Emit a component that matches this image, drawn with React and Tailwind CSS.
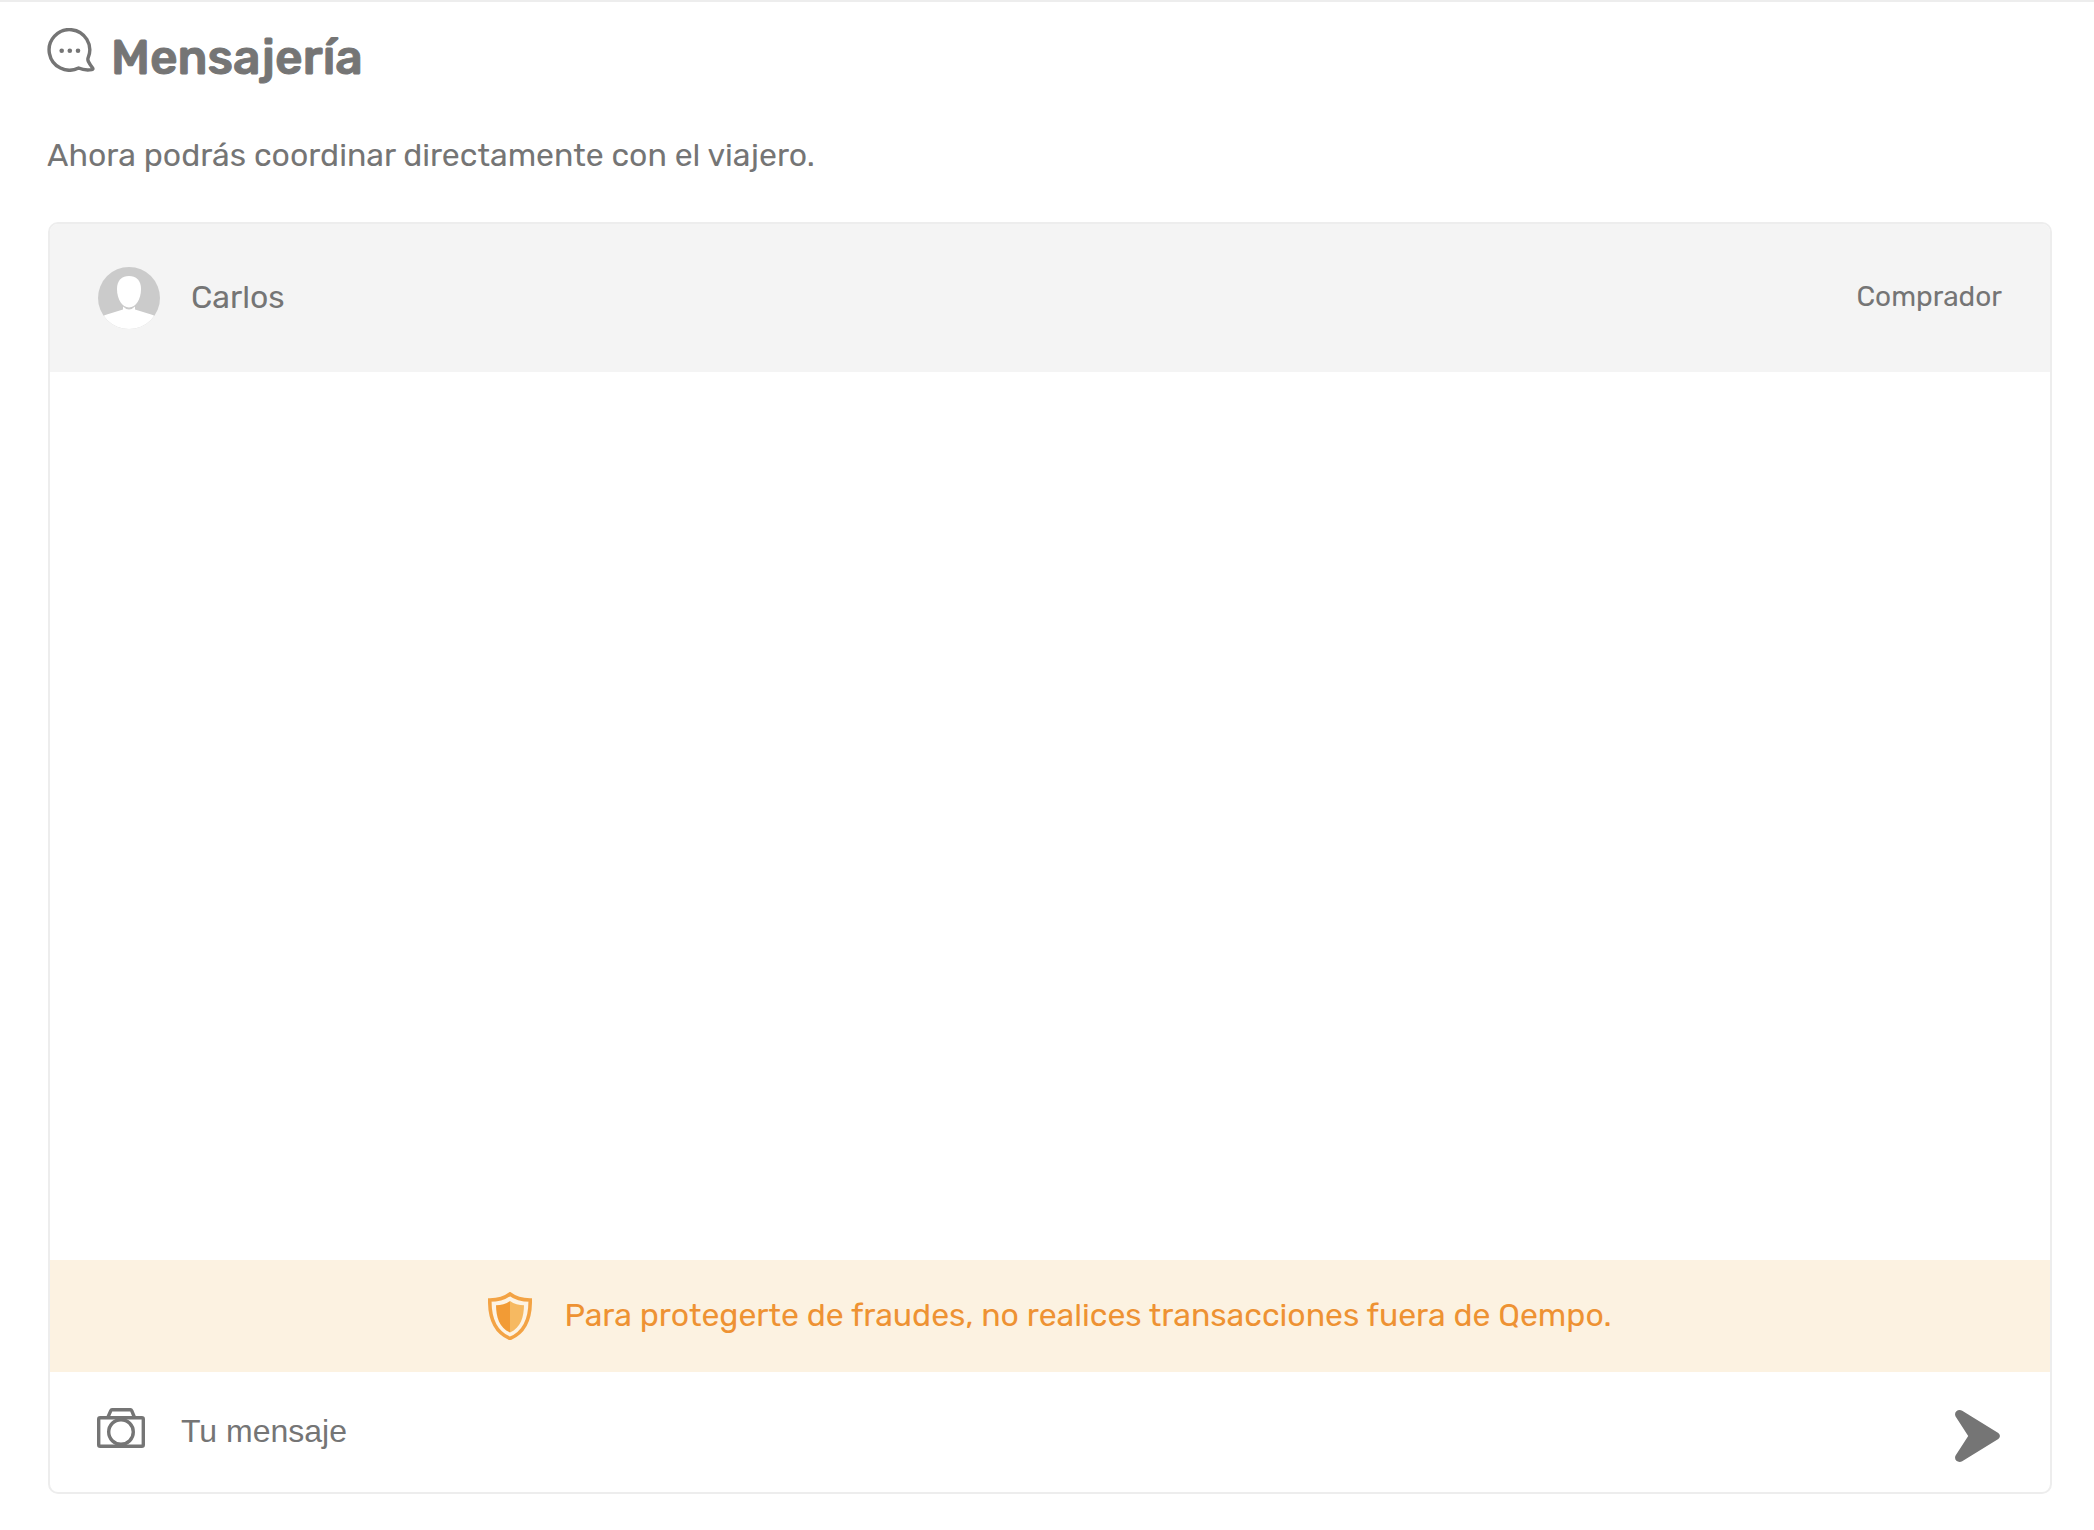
import { useState } from "react";

function ChatIcon() {
    return (
        <svg width="48" height="44" viewBox="0 0 48 44" fill="none" aria-hidden="true" className="shrink-0">
            <path
                d="M31.6 40 A20.3 20.3 0 1 1 41.2 29.6 C40.6 31 40.8 32.2 41.4 33.6 C42.4 35.7 44 38 45.5 39.8 C46.3 40.8 45.9 41.4 44.8 41.6 C40.5 42.3 36.5 42.2 31.6 40 Z"
                stroke="currentColor"
                strokeWidth="3.4"
                strokeLinejoin="round"
            />
            <circle cx="14.7" cy="22.7" r="2.3" fill="currentColor" />
            <circle cx="22.8" cy="22.7" r="2.3" fill="currentColor" />
            <circle cx="31" cy="22.7" r="2.3" fill="currentColor" />
        </svg>
    );
}

function Avatar() {
    return (
        <svg width="62" height="62" viewBox="0 0 62 62" role="img" aria-label="Foto de perfil" className="shrink-0">
            <clipPath id="avatar-clip">
                <circle cx="31" cy="31" r="31" />
            </clipPath>
            <g clipPath="url(#avatar-clip)">
                <rect width="62" height="62" fill="#cbcbcb" />
                <path d="M25 36 V42.5 L8 47.8 Q4 49 3 53 V62 H59 V53 Q58 49 54 47.8 L37 42.5 V36 Z" fill="#fff" />
                <path d="M25 36 V39.5 Q31 45.5 37 39.5 V36 Z" fill="#cbcbcb" />
                <path d="M19 22 C19 13 24 9 31 9 C38 9 43 13 43 22 C43 32 38 40.5 31 40.5 C24 40.5 19 32 19 22 Z" fill="#fff" />
            </g>
        </svg>
    );
}

function ShieldIcon() {
    return (
        <svg width="44" height="48" viewBox="0 0 44 48" aria-hidden="true" className="shrink-0">
            <path
                d="M22 2 C17 6 9 8 1.8 8 C1.5 26 6.5 40 22 46.5 C37.5 40 42.5 26 42.2 8 C35 8 27 6 22 2 Z"
                fill="#fdf3e3"
                stroke="#f3a344"
                strokeWidth="3.6"
            />
            <path d="M22 9 C18 12 13 13.2 8 13.2 C8.2 25 11 35.5 22 40.5 Z" fill="#f29b35" />
            <path d="M22 9 C26 12 31 13.2 36 13.2 C35.8 25 33 35.5 22 40.5 Z" fill="#f6b961" />
        </svg>
    );
}

function CameraIcon() {
    return (
        <svg width="48" height="40" viewBox="0 0 48 40" fill="none" stroke="currentColor" strokeWidth="3.4" strokeLinejoin="round" aria-hidden="true">
            <rect x="1.7" y="9.7" width="44.6" height="28.6" rx="1.5" />
            <path d="M10.8 9.5 L13.8 2.6 Q14.2 1.7 15 1.7 H33.5 Q34.3 1.7 34.7 2.6 L37.5 9.5" />
            <circle cx="24" cy="24" r="12.3" />
        </svg>
    );
}

function SendIcon() {
    return (
        <svg width="46" height="52" viewBox="0 0 46 52" fill="currentColor" aria-hidden="true">
            <path d="M7.2 0.8 L43.3 23 Q46.6 26 43.3 29 L7.2 51.2 C3.2 53.4 -1.6 50 0.6 45.6 L13.2 26 L0.6 6.4 C-1.6 2 3.2 -1.4 7.2 0.8 Z" />
        </svg>
    );
}

export default function App() {
    const [message, setMessage] = useState("");

    return (
        <main className="border-t-2 border-[#ededed] bg-white pt-[26px] pr-[42px] pb-9 font-['Rubik','Roboto',sans-serif] text-[32px] leading-10 text-[#757575]">
            {/* Title */}
            <div className="pl-[47px]">
                <div className="flex items-start gap-4">
                    <ChatIcon />
                    <h1 className="text-[48px] leading-[60px] font-medium [-webkit-text-stroke:1px_currentColor]">Mensajería</h1>
                </div>
                <p className="mt-[47px]">Ahora podrás coordinar directamente con el viajero.</p>
            </div>

            {/* Conversation */}
            <section className="mt-[47px] ml-12 overflow-hidden rounded-[10px] border-2 border-[#ededed]">
                <header className="flex h-[148px] items-center gap-[31px] bg-[#f4f4f4] px-12">
                    <Avatar />
                    <h2 className="flex-1 pb-0.5">Carlos</h2>
                    <span className="pb-0.5 text-[28px]">Comprador</span>
                </header>

                <div className="h-[888px] overflow-y-auto" />

                <div className="flex min-h-28 items-center justify-center gap-8 bg-[#fcf2e1] text-[#ee9233]">
                    <ShieldIcon />
                    <p className="pb-0.5">Para protegerte de fraudes, no realices transacciones fuera de Qempo.</p>
                </div>

                <form className="flex h-[120px] items-start pt-9 pr-[49px] pl-[47px]" onSubmit={(e) => e.preventDefault()}>
                    <button type="button" aria-label="Adjuntar foto">
                        <CameraIcon />
                    </button>
                    <input
                        type="text"
                        aria-label="Tu mensaje"
                        placeholder="Tu mensaje"
                        value={message}
                        onChange={(e) => setMessage(e.target.value)}
                        className="mx-9 h-[46px] min-w-0 flex-1 font-['Liberation_Sans',Arial,sans-serif] outline-none placeholder:text-[#757575]"
                    />
                    <button type="submit" aria-label="Enviar" className="pt-0.5">
                        <SendIcon />
                    </button>
                </form>
            </section>
        </main>
    );
}
